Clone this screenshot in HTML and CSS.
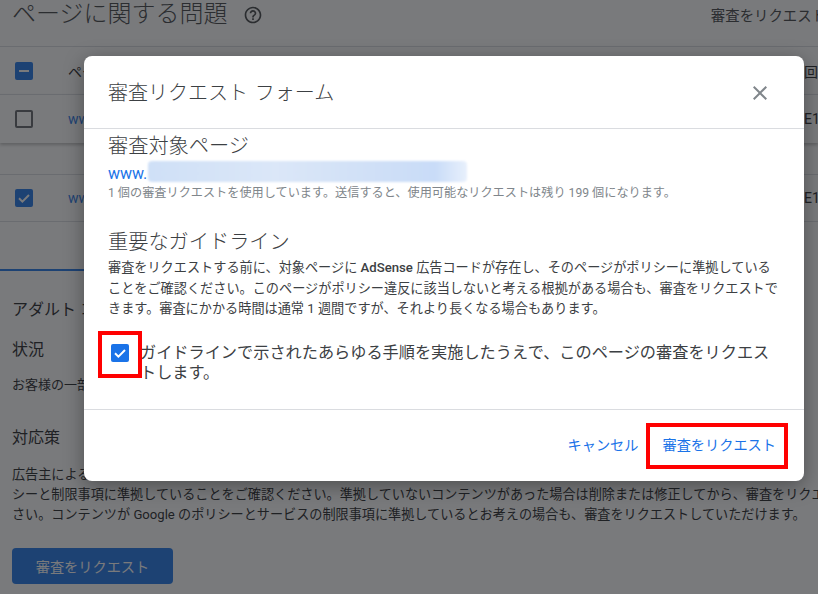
FILE: index.html
```html
<!DOCTYPE html>
<html lang="ja">
<head>
<meta charset="utf-8">
<title>審査リクエスト フォーム</title>
<link rel="stylesheet" href="styles.css">
</head>
<body>
<main class="page">
  <header class="page-head">
    <h1 class="page-title">ページに関する問題</h1>
    <svg class="help" viewBox="0 0 24 24"><path d="M11 18h2v-2h-2v2zm1-16C6.48 2 2 6.48 2 12s4.48 10 10 10 10-4.48 10-10S17.52 2 12 2zm0 18c-4.41 0-8-3.59-8-8s3.59-8 8-8 8 3.59 8 8-3.59 8-8 8zm0-14c-2.21 0-4 1.79-4 4h2c0-1.1.9-2 2-2s2 .9 2 2c0 2-3 1.75-3 5h2c0-2.25 3-2.5 3-5 0-2.21-1.79-4-4-4z"/></svg>
    <span class="head-action">審査をリクエスト</span>
  </header>
  <div class="row row-head">
    <span class="box box-on"><svg viewBox="0 0 18 18"><path d="M4 9h10" class="mark"/></svg></span>
    <span class="cell-label">ページ</span>
    <span class="cell-end">回復</span>
  </div>
  <div class="row row-card">
    <span class="box box-off"></span>
    <span class="cell-link">www.example.com</span>
    <span class="cell-end">E1</span>
  </div>
  <div class="row-gap"></div>
  <div class="row row-selected">
    <span class="box box-on"><svg viewBox="0 0 18 18"><path d="M4 9.2l3.4 3.4L14 6" class="mark"/></svg></span>
    <span class="cell-link">www.example.com</span>
    <span class="cell-end">E1</span>
  </div>
  <div class="tab-line"></div>
  <section class="detail">
    <h2 class="detail-title">アダルト コンテンツ</h2>
    <h3 class="detail-sub">状況</h3>
    <p class="detail-line">お客様の一部のページに問題が見つかりました。</p>
    <h3 class="detail-sub detail-sub-gap">対応策</h3>
    <p class="detail-text">広告主によるアダルト コンテンツへの広告掲載は制限されています。ページを確認のうえ、コンテンツがポリ<br>シーと制限事項に準拠していることをご確認ください。準拠していないコンテンツがあった場合は削除または修正してから、審査をリクエストしてくだ<br>さい。コンテンツが Google のポリシーとサービスの制限事項に準拠しているとお考えの場合も、審査をリクエストしていただけます。</p>
    <button class="primary" type="button">審査をリクエスト</button>
  </section>
</main>

<div class="overlay"></div>

<div class="dialog" role="dialog">
  <div class="dialog-head">
    <h2 class="dialog-title">審査リクエスト フォーム</h2>
    <svg class="close" viewBox="0 0 24 24"><path d="M19 6.41 17.59 5 12 10.59 6.41 5 5 6.41 10.59 12 5 17.59 6.41 19 12 13.41 17.59 19 19 17.59 13.41 12z"/></svg>
  </div>
  <div class="dialog-body">
    <h3 class="section-title">審査対象ページ</h3>
    <div class="url"><span>www.</span><span class="url-blur"></span></div>
    <p class="note">1 個の審査リクエストを使用しています。送信すると、使用可能なリクエストは残り 199 個になります。</p>
    <h3 class="section-title section-gap">重要なガイドライン</h3>
    <p class="guide">審査をリクエストする前に、対象ページに <b>AdSense</b> 広告コードが存在し、そのページがポリシーに準拠している<br>ことをご確認ください。このページがポリシー違反に該当しないと考える根拠がある場合も、審査をリクエストで<br>きます。審査にかかる時間は通常 1 週間ですが、それより長くなる場合もあります。</p>
    <div class="confirm">
      <span class="confirm-box"><svg viewBox="0 0 18 18"><path d="M4 9.2l3.4 3.4L14 6" class="mark"/></svg></span>
      <span class="confirm-text">ガイドラインで示されたあらゆる手順を実施したうえで、このページの審査をリクエストします。</span>
      <span class="callout callout-check"></span>
    </div>
  </div>
  <div class="dialog-foot">
    <a class="text-btn">キャンセル</a>
    <a class="text-btn text-btn-main">審査をリクエスト<span class="callout callout-submit"></span></a>
  </div>
</div>
</body>
</html>
```
FILE: styles.css
```css
* { box-sizing: border-box; }
html, body { margin: 0; height: 100%; overflow: hidden; }
body {
  background: #fff;
  color: #202124;
  font-family: Roboto, "Noto Sans CJK JP", sans-serif;
  width: 818px;
  height: 594px;
  position: relative;
}
h1, h2, h3, p { margin: 0; font-weight: 400; }

.page { height: 594px; overflow: hidden; }
.page-head { height: 46px; padding: 0 0 18px 12px; display: flex; align-items: center; white-space: nowrap; }
.page-title { font-size: 24px; line-height: 28px; font-weight: 300; color: #3c4043; }
.help { width: 20px; height: 20px; margin: 2px 0 0 15px; fill: #3c4043; }
.head-action { margin-left: auto; margin-right: -8px; font-size: 14.4px; color: #3c4043; }

.row { display: flex; align-items: center; padding-left: 15px; border-top: 1px solid #dadce0; white-space: nowrap; }
.row-head { height: 48px; }
.row-card { height: 49px; box-shadow: 0 2px 3px rgba(0, 0, 0, .25); }
.row-gap { height: 31px; }
.row-selected { height: 48px; border-bottom: 1px solid #dadce0; }
.box { width: 18px; height: 18px; border-radius: 2px; flex: none; }
.box svg { display: block; width: 18px; height: 18px; }
.box-on { background: #1a73e8; }
.box-off { border: 2px solid #5f6368; }
.mark { fill: none; stroke: #fff; stroke-width: 2; }
.cell-label { margin-left: 35px; font-size: 14px; }
.cell-link { margin-left: 35px; font-size: 14px; color: #1a73e8; }
.cell-end { margin-left: auto; width: 14px; overflow: hidden; font-size: 14px; }

.tab-line { height: 2px; margin-top: 47px; background: #1a73e8; width: 200px; }
.detail { padding: 0 0 0 12px; white-space: nowrap; }
.detail-title { margin-top: 27px; font-size: 16px; line-height: 24px; }
.detail-sub { margin-top: 16px; font-size: 16px; line-height: 24px; }
.detail-line { margin-top: 13px; font-size: 13px; line-height: 20px; }
.detail-sub-gap { margin-top: 31px; }
.detail-text { margin-top: 15px; font-size: 13.14px; line-height: 20px; }
.primary {
  display: block;
  margin-top: 23px;
  width: 161px;
  height: 36px;
  border: 0;
  border-radius: 4px;
  background: #1a73e8;
  color: #fff;
  font: inherit;
  font-size: 14.2px;
}

.overlay { position: absolute; inset: 0; background: rgba(32, 33, 36, .6); }

.dialog {
  position: absolute;
  left: 84px;
  top: 56px;
  width: 720px;
  height: 425px;
  background: #fff;
  border-radius: 8px;
  box-shadow: 0 5px 20px rgba(0, 0, 0, .35);
  display: flex;
  flex-direction: column;
}
.dialog-head {
  height: 73px;
  flex: none;
  padding: 2px 32px 0 24px;
  display: flex;
  align-items: center;
  justify-content: space-between;
  border-bottom: 1px solid #dadce0;
}
.dialog-title { font-size: 20px; line-height: 28px; font-weight: 300; word-spacing: 2px; color: #3c4043; }
.close { width: 24px; height: 24px; fill: #80868b; }

.dialog-body { flex: 1; padding: 3px 0 0 24px; border-bottom: 1px solid #dadce0; }
.section-title { font-size: 20.2px; line-height: 28px; font-weight: 300; color: #3c4043; }
.section-gap { margin-top: 26px; }
.url { display: flex; align-items: center; height: 24px; margin-top: 1px; font-size: 16px; color: #1a73e8; }
.url-blur {
  width: 319px;
  height: 21px;
  margin: -4px 0 0 1px;
  border-radius: 4px;
  background: linear-gradient(90deg, #cfe0f7, #dbe7f8 40%, #d0e0f7 70%, #c9dcf8 90%, #e8f0fc);
  filter: blur(1px);
}
.note { margin-top: -1px; font-size: 12.17px; line-height: 18px; color: #80868b; }
.guide { margin-top: 2px; font-size: 13.17px; line-height: 20.5px; color: #3c4043; white-space: nowrap; }
.guide b { font-weight: 500; }

.confirm { position: relative; display: flex; margin-top: 23px; padding-left: 3px; }
.confirm-box { width: 18px; height: 18px; margin-top: 1px; border-radius: 2px; background: #1a73e8; flex: none; }
.confirm-box svg { display: block; width: 18px; height: 18px; }
.confirm-text { width: 632px; margin-left: 11px; font-size: 16.18px; line-height: 20px; color: #3c4043; }

.callout { position: absolute; border: 4px solid #f00; pointer-events: none; }
.callout-check { left: -10px; top: -12px; width: 44px; height: 47px; }
.callout-submit { left: -16px; top: -10px; width: 142px; height: 46px; }

.dialog-foot { height: 71px; flex: none; display: flex; align-items: center; justify-content: flex-end; padding: 0 28px 2px 0; }
.text-btn { position: relative; font-size: 14.2px; line-height: 24px; color: #1a73e8; white-space: nowrap; }
.text-btn-main { margin-left: 24px; }
```
